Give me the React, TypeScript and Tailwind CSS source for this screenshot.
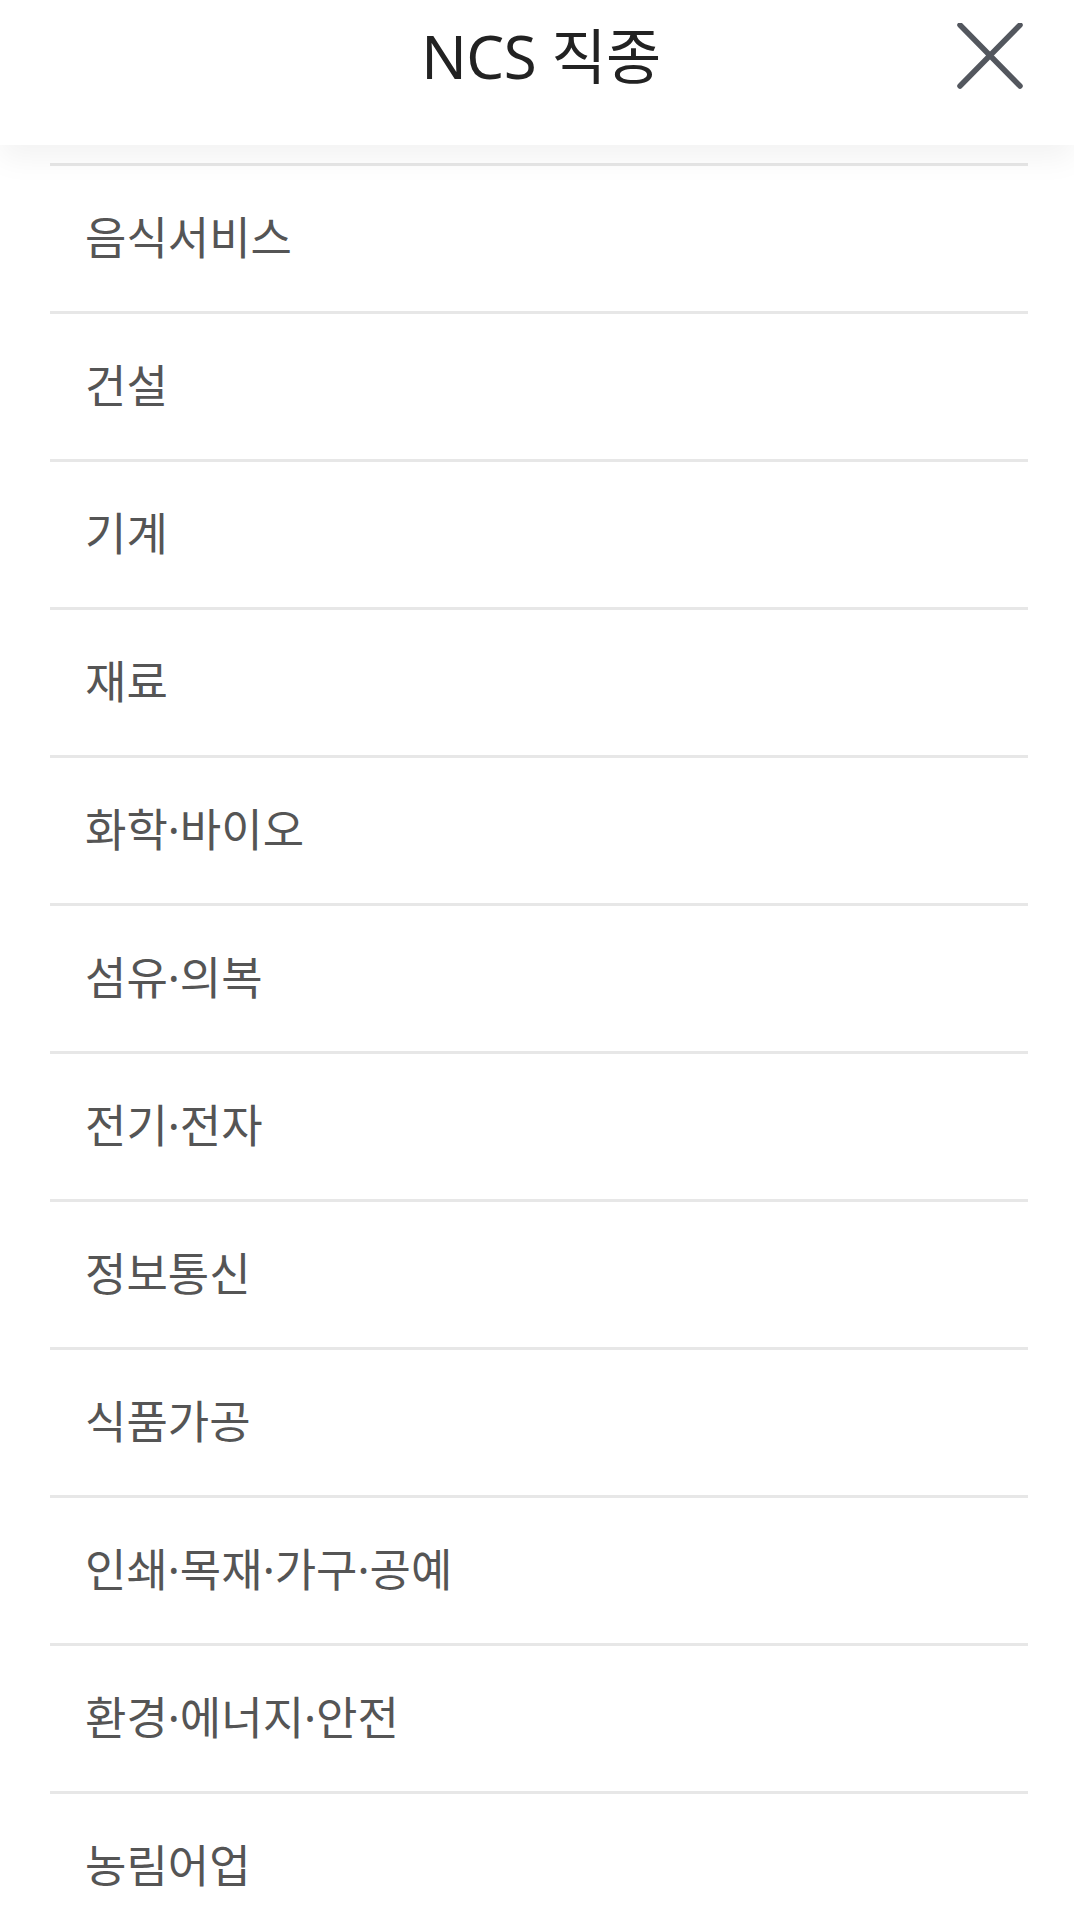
import React from 'react';

const jobs = [
  '음식서비스',
  '건설',
  '기계',
  '재료',
  '화학·바이오',
  '섬유·의복',
  '전기·전자',
  '정보통신',
  '식품가공',
  '인쇄·목재·가구·공예',
  '환경·에너지·안전',
  '농림어업',
];

export default function App() {
  return (
    <div
      className="w-[1074px] h-[1909px] overflow-hidden bg-white"
      style={{ fontFamily: '"Noto Sans", "Noto Sans CJK KR", sans-serif' }}
    >
      {/* Header */}
      <div className="relative z-10 h-[145px] bg-white shadow-[0_14px_28px_rgba(0,0,0,0.05)]">
        <div className="grid grid-cols-[1fr_auto_1fr] items-center h-[112px]">
          <div />
          <h1 className="text-[60px] leading-none text-[#222222] font-normal tracking-[-0.5px] pl-[8px]">
            NCS 직종
          </h1>
          <div className="flex justify-end pr-[51px]">
            <button className="w-[66px] h-[66px] flex items-center justify-center">
              <svg width="66" height="66" viewBox="0 0 66 66" fill="none">
                <path
                  d="M3 2 L63 63 M63 2 L3 63"
                  stroke="#53575e"
                  strokeWidth="5.5"
                  strokeLinecap="round"
                />
              </svg>
            </button>
          </div>
        </div>
      </div>

      {/* List */}
      <div className="mt-[18px] ml-[50px] mr-[46px]">
        {jobs.map((job) => (
          <div
            key={job}
            className="h-[148px] border-t-[3px] border-[#e7e7e7] flex items-center pl-[35px]"
          >
            <span className="text-[45px] leading-none text-[#555555] -mt-[3px]">
              {job}
            </span>
          </div>
        ))}
      </div>
    </div>
  );
}
